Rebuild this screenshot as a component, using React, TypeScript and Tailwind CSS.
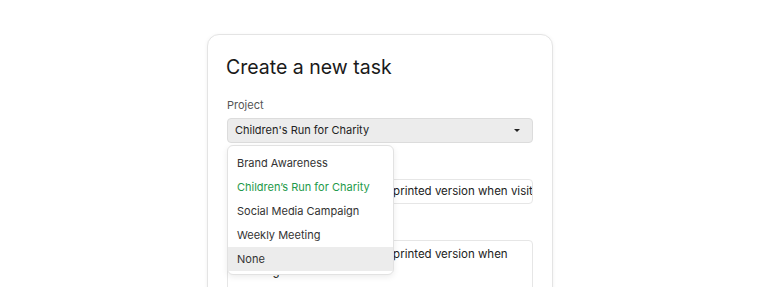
const projects = [
  "Brand Awareness",
  "Children’s Run for Charity",
  "Social Media Campaign",
  "Weekly Meeting",
  "None",
];

const taskText = "Do not forget to pick up the printed version when visiting the office";

export default function App() {
  return (
    <div className="min-h-screen bg-white font-['Inter',sans-serif] text-[#1f1f1f]">
      <div className="mx-auto mt-[34px] w-[346px] rounded-xl border border-[#e4e4e4] bg-white px-[19px] pt-[18px] pb-10 shadow-[0_1px_4px_rgba(0,0,0,0.06)]">
        <h1 className="-ml-px text-[19.5px] leading-7 font-normal text-[#1a1a1a]">Create a new task</h1>

        <div className="mt-[16px]">
          <label className="block text-[11px] leading-4 text-[#555]">Project</label>
          <div className="relative mt-[5px]">
            <div className="flex h-[25px] items-center justify-between rounded border border-[#dcdcdc] bg-[#ececec] pr-2 pl-[7px] text-[11px] text-[#222]">
              <span>Children's Run for Charity</span>
              <span className="mr-[4px] h-0 w-0 border-x-[3px] border-t-[3px] border-x-transparent border-t-[#222]" />
            </div>
            <ul className="absolute top-full left-0 z-10 mt-[2px] w-[167px] rounded-md border border-[#e2e2e2] bg-white pt-[5px] pb-[3px] shadow-[0_2px_6px_rgba(0,0,0,0.08)]">
              {projects.map((p) => (
                <li
                  key={p}
                  className={
                    p === "None"
                      ? "flex h-6 items-center bg-[#ececec] px-[9px] text-[11px] text-[#333]"
                      : p.startsWith("Children")
                        ? "flex h-6 items-center px-[9px] text-[11px] text-[#1e9a4b]"
                        : "flex h-6 items-center px-[9px] text-[11px] text-[#333]"
                  }
                >
                  {p}
                </li>
              ))}
            </ul>
          </div>
        </div>

        <div className="mt-[15px]">
          <label className="block text-[11px] leading-4 text-[#555]">Title</label>
          <div className="mt-[5px] flex h-[25px] items-center overflow-hidden rounded border border-[#e6e6e6] pr-2 pl-[13px] text-[11.5px] whitespace-nowrap text-[#222]">
            {taskText}
          </div>
        </div>

        <div className="mt-[15px]">
          <label className="block text-[11px] leading-4 text-[#555]">Description</label>
          <div className="mt-[5px] h-[80px] rounded border border-[#e6e6e6] py-[5px] pr-2 pl-[13px] text-[11.5px] leading-[17px] text-[#222]">
            {taskText}
          </div>
        </div>
      </div>
    </div>
  );
}
